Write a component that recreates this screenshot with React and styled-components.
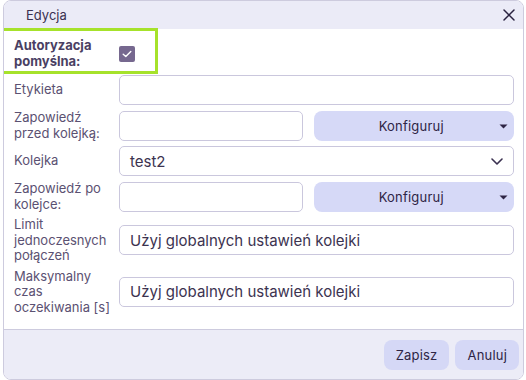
import styled, { createGlobalStyle } from 'styled-components'

const GlobalStyle = createGlobalStyle`
  html, body {
    margin: 0;
    background: #ffffff;
  }
  body {
    font-family: Inter, 'Noto Sans', sans-serif;
    color: #4a4060;
  }
`

const Dialog = styled.div`
  position: relative;
  width: 519px;
  margin-left: 3px;
  border: 1px solid #cdcbde;
  border-radius: 8px;
  overflow: hidden;
  background: #fff;
`

const Header = styled.div`
  height: 28px;
  display: flex;
  align-items: center;
  justify-content: space-between;
  padding: 0 6px 0 22px;
  background: #ebebf7;
  font-size: 13px;
  color: #3a3050;
`

const CloseButton = styled.button`
  border: 0;
  background: none;
  padding: 0;
  width: 16px;
  height: 16px;
  display: flex;
  align-items: center;
  justify-content: center;
  cursor: pointer;
`

const Body = styled.div`
  display: flex;
  flex-direction: column;
  gap: 5px;
  padding: 8px 9px 14px 10px;
`

const Row = styled.div`
  display: grid;
  grid-template-columns: 105px 1fr;
  align-items: center;
  min-height: ${(p) => p.$minHeight || 30}px;
`

const Label = styled.div`
  font-size: 13px;
  line-height: 15.5px;
  color: ${(p) => (p.$strong ? '#4a3f63' : '#5b5172')};
  font-weight: ${(p) => (p.$strong ? 700 : 400)};
  padding-right: 6px;
`

const Highlight = styled.div`
  position: absolute;
  left: -4px;
  top: 27px;
  width: 152px;
  height: 40px;
  border: 3px solid #a6e22b;
  pointer-events: none;
`

const Checkbox = styled.span`
  width: 16px;
  height: 16px;
  border-radius: 2px;
  background: #76688f;
  display: flex;
  align-items: center;
  justify-content: center;
`

const Input = styled.div`
  box-sizing: border-box;
  height: 30px;
  border: 1px solid #cac7dd;
  border-radius: 5px;
  background: #fff;
  display: flex;
  align-items: center;
  justify-content: space-between;
  padding: 0 10px;
  font-size: 15px;
  color: #3c3350;
`

const Split = styled.div`
  display: grid;
  grid-template-columns: 184fr 199fr;
  gap: 11px;
`

const MenuButton = styled.button`
  position: relative;
  height: 30px;
  border: 0;
  border-radius: 8px;
  background: #d6d9f7;
  font-family: inherit;
  font-size: 13px;
  font-weight: 400;
  letter-spacing: 0.2px;
  color: #2e2545;
  display: flex;
  align-items: center;
  justify-content: center;
  padding: 0 30px 0 24px;
  cursor: pointer;

  svg {
    position: absolute;
    right: 6px;
    top: 13px;
  }
`

const Footer = styled.div`
  height: 49px;
  border-top: 1px solid #cdcbde;
  background: #ececf7;
  display: flex;
  align-items: center;
  justify-content: flex-end;
  gap: 6px;
  padding: 0 4px 0 0;
`

const FooterButton = styled.button`
  height: 30px;
  padding: 0 12px;
  min-width: 62px;
  border: 0;
  border-radius: 8px;
  background: #d5d8f6;
  font-family: inherit;
  font-size: 13px;
  font-weight: 400;
  letter-spacing: 0.2px;
  color: #2e2545;
  cursor: pointer;
`

const Caret = () => (
  <svg width="9" height="5" viewBox="0 0 9 5">
    <path d="M0.5 0.5 H8.5 L4.5 4.5 Z" fill="#2e2545" />
  </svg>
)

const Chevron = () => (
  <svg width="12" height="7" viewBox="0 0 12 7">
    <path d="M1 1 L6 6 L11 1" fill="none" stroke="#3a3050" strokeWidth="1.6" strokeLinecap="round" strokeLinejoin="round" />
  </svg>
)

const App = () => {
  return (
    <>
      <GlobalStyle />
      <Dialog>
        <Header>
          <span>Edycja</span>
          <CloseButton aria-label="Zamknij">
            <svg width="12" height="12" viewBox="0 0 12 12">
              <path d="M1 1 L11 11 M11 1 L1 11" stroke="#2a2240" strokeWidth="1.5" strokeLinecap="round" />
            </svg>
          </CloseButton>
        </Header>
        <Body>
          <Row $minHeight={33}>
            <Label $strong>Autoryzacja pomyślna:</Label>
            <Checkbox>
              <svg width="10" height="8" viewBox="0 0 10 8">
                <path d="M1.2 4.2 L3.8 6.6 L8.8 1.4" fill="none" stroke="#fff" strokeWidth="1.4" strokeLinecap="round" strokeLinejoin="round" />
              </svg>
            </Checkbox>
          </Row>
          <Row>
            <Label>Etykieta</Label>
            <Input />
          </Row>
          <Row>
            <Label>Zapowiedź przed kolejką:</Label>
            <Split>
              <Input />
              <MenuButton>
                Konfiguruj
                <Caret />
              </MenuButton>
            </Split>
          </Row>
          <Row>
            <Label>Kolejka</Label>
            <Input>
              <span>test2</span>
              <Chevron />
            </Input>
          </Row>
          <Row>
            <Label>Zapowiedź po kolejce:</Label>
            <Split>
              <Input />
              <MenuButton>
                Konfiguruj
                <Caret />
              </MenuButton>
            </Split>
          </Row>
          <Row>
            <Label>Limit jednoczesnych połączeń</Label>
            <Input>Użyj globalnych ustawień kolejki</Input>
          </Row>
          <Row>
            <Label>Maksymalny czas oczekiwania [s]</Label>
            <Input>Użyj globalnych ustawień kolejki</Input>
          </Row>
        </Body>
        <Footer>
          <FooterButton>Zapisz</FooterButton>
          <FooterButton>Anuluj</FooterButton>
        </Footer>
        <Highlight />
      </Dialog>
    </>
  )
}

export default App
